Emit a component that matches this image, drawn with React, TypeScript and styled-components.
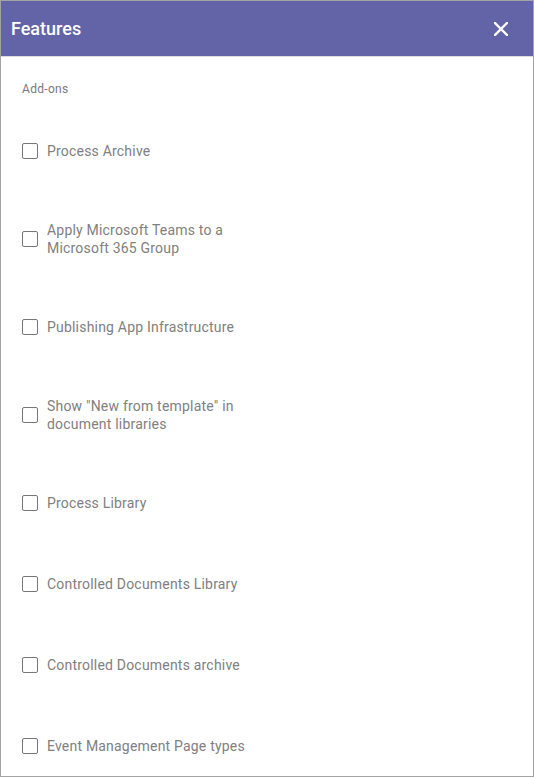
import React, { FC } from 'react'
import styled, { createGlobalStyle } from 'styled-components'

const GlobalStyle = createGlobalStyle`
    html, body {
        margin: 0;
        padding: 0;
        background: #ffffff;
    }
    * {
        box-sizing: border-box;
    }
`

const Panel = styled.div`
    width: 534px;
    height: 777px;
    border: 1px solid #a3a3a3;
    background: #ffffff;
    display: flex;
    flex-direction: column;
    font-family: Roboto, "Liberation Sans", sans-serif;
`

const Header = styled.header`
    height: 56px;
    flex-shrink: 0;
    background: #6264a7;
    border-bottom: 1px solid #dcdcdc;
    display: flex;
    align-items: center;
    justify-content: space-between;
    padding: 0 25px 0 10px;
`

const Title = styled.h1`
    margin: 0;
    font-size: 18px;
    font-weight: 500;
    color: #ffffff;
`

const CloseButton = styled.button`
    border: none;
    background: none;
    padding: 0;
    width: 14px;
    height: 14px;
    display: flex;
    cursor: pointer;
`

const Body = styled.div`
    padding: 24px 20px;
`

const SectionLabel = styled.div`
    font-size: 12px;
    line-height: 16px;
    color: #7a7a7a;
    padding-left: 1px;
    letter-spacing: 0.3px;
`

const List = styled.ul`
    list-style: none;
    margin: 43px 0 0;
    padding: 0;
    display: flex;
    flex-direction: column;
    gap: 59px;
`

const Row = styled.li`
    display: flex;
    align-items: center;
    gap: 9px;
    min-height: 22px;
`

const Box = styled.span`
    width: 16px;
    height: 16px;
    flex-shrink: 0;
    border: 1.5px solid #777777;
    border-radius: 2px;
    margin-left: 1px;
`

const Label = styled.span`
    font-size: 14px;
    line-height: 18px;
    color: #808080;
    letter-spacing: 0.2px;
    max-width: 200px;
`

const features = [
    'Process Archive',
    'Apply Microsoft Teams to a Microsoft 365 Group',
    'Publishing App Infrastructure',
    'Show "New from template" in document libraries',
    'Process Library',
    'Controlled Documents Library',
    'Controlled Documents archive',
    'Event Management Page types',
]

const CloseIcon: FC = () => (
    <svg width="14" height="14" viewBox="0 0 14 14">
        <path d="M1 1L13 13M13 1L1 13" stroke="#ffffff" strokeWidth="2.4" strokeLinecap="square" />
    </svg>
)

const App: FC = () => {
    return (
        <>
            <GlobalStyle />
            <Panel>
                <Header>
                    <Title>Features</Title>
                    <CloseButton aria-label="Close">
                        <CloseIcon />
                    </CloseButton>
                </Header>
                <Body>
                    <SectionLabel>Add-ons</SectionLabel>
                    <List>
                        {features.map((name) => (
                            <Row key={name}>
                                <Box />
                                <Label>{name}</Label>
                            </Row>
                        ))}
                    </List>
                </Body>
            </Panel>
        </>
    )
}

export default App
